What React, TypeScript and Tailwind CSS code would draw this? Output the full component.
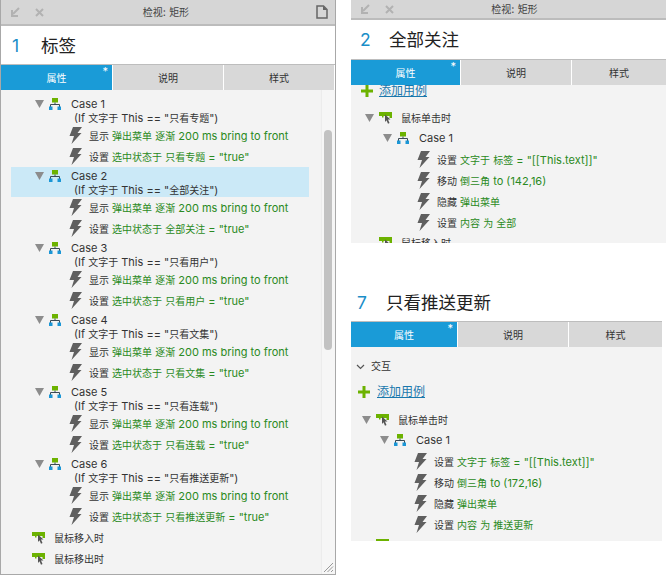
import type { ReactNode } from "react";

const FONT = "font-['Inter','Noto_Sans_CJK_SC',sans-serif]";

// latin runs stay 11px, chinese runs sit at 10px like the original
const Txt = ({ children }: { children: string }) => (
  <>
    {children.split(/([\u4e00-\u9fff]+)/).map((part, i) =>
      i % 2 === 1 ? (
        <span key={i} className="text-[10px]">
          {part}
        </span>
      ) : (
        part
      )
    )}
  </>
);

const Triangle = () => (
  <svg width="9" height="8" viewBox="0 0 9 8" className="shrink-0">
    <path d="M0 0h9L4.500 8z" fill="#8c8c8c" />
  </svg>
);

const CaseIcon = () => (
  <svg width="12" height="12" viewBox="0 0 12 12" className="shrink-0">
    <rect x="3" y="0" width="6" height="4.500" fill="#6cb200" />
    <path d="M1.500 9V6.500h9V9M6 4.500v2" fill="none" stroke="#3a4a55" strokeWidth="1" />
    <rect x="0" y="8.500" width="3.500" height="3.500" fill="#1a96d6" />
    <rect x="8.500" y="8.500" width="3.500" height="3.500" fill="#1a96d6" />
  </svg>
);

const Bolt = () => (
  <svg width="13" height="17" viewBox="0 0 13 17" className="shrink-0">
    <path d="M4 0h9L8.500 6H12.500L2.500 17 5 9H0.500z" fill="#5f5f5f" />
  </svg>
);

const EventIcon = () => (
  <svg width="13" height="12" viewBox="0 0 13 12" className="shrink-0">
    <path d="M0 0h13v6h-2.500V4H4.500v1.500H3V4H0z" fill="#6cb200" />
    <path d="M6 2.500l5.500 5H9l1.500 3.500-1.500.7-1.500-3.500L6 10z" fill="#555" />
  </svg>
);

const Plus = () => (
  <svg width="12" height="12" viewBox="0 0 12 12" className="shrink-0">
    <path d="M4.500 0h3v4.500H12v3H7.500V12h-3V7.500H0v-3h4.500z" fill="#6cb200" />
  </svg>
);

const Action = ({ verb, text, left }: { verb: string; text: string; left: string }) => (
  <div className={`flex h-[21px] items-center ${left}`}>
    <Bolt />
    <span className="ml-[7px] whitespace-nowrap pt-[1px] text-[#333]">
      <Txt>{verb}</Txt>{" "}
      <span className="text-[#2a8a22]">
        <Txt>{text}</Txt>
      </span>
    </span>
  </div>
);

const CaseBlock = ({ n, cond, selected }: { n: number; cond: string; selected?: boolean }) => (
  <div>
    <div className={`h-[30px] pl-[24px] pt-[2px] leading-[13px] ${selected ? "bg-[#cbe9f7]" : ""}`}>
      <div className="flex h-[14px] items-center">
        <Triangle />
        <span className="ml-[5px]"><CaseIcon /></span>
        <span className="ml-[10px] pt-[1px] text-[#333]">Case {n}</span>
      </div>
      <div className="ml-[39px] whitespace-nowrap pt-[1px] text-[#333]">
        <Txt>{`(If 文字于 This == "${cond}")`}</Txt>
      </div>
    </div>
    <Action left="pl-[58px]" verb="显示" text="弹出菜单 逐渐 200 ms bring to front" />
    <Action left="pl-[58px]" verb="设置" text={`选中状态于 ${cond} = "true"`} />
  </div>
);

const Tabs = ({ widths }: { widths: string[] }) => (
  <div className="flex h-[26px] shrink-0 border-t border-[#bdbdbd] text-[10px]">
    <div className={`relative flex items-center justify-center bg-[#1a9bd7] pt-[2px] text-white ${widths[0]}`}>
      属性
      <span className="absolute right-[4px] top-[1px] text-[11px] leading-[11px]">*</span>
    </div>
    <div className={`flex items-center justify-center border-l border-white bg-[#d8d8d8] pt-[2px] text-[#333] ${widths[1]}`}>说明</div>
    <div className={`flex items-center justify-center border-l border-white bg-[#d8d8d8] pt-[2px] text-[#333] ${widths[2]}`}>样式</div>
  </div>
);

const Title = ({ n, text, box }: { n: number; text: string; box: string }) => (
  <div className={`flex shrink-0 items-center bg-white text-[17.5px] ${box}`}>
    <span className="w-[29px] text-[#1a8ec8]">{n}</span>
    <span className="text-[#222]">{text}</span>
  </div>
);

const ClickTree = ({ pos, target, tail }: { pos: string; target: string; tail?: boolean }) => (
  <div>
    <div className="flex h-[20px] items-center pl-[14px]">
      <Triangle />
      <span className="ml-[5px]"><EventIcon /></span>
      <span className="ml-[9px] pt-[1px] text-[10px] text-[#333]">鼠标单击时</span>
    </div>
    <div className="flex h-[20px] items-center pl-[32px]">
      <Triangle />
      <span className="ml-[5px]"><CaseIcon /></span>
      <span className="ml-[10px] pt-[1px] text-[#333]">Case 1</span>
    </div>
    <div className="h-[1px]" />
    <Action left="pl-[66px]" verb="设置" text={`文字于 标签 = "[[This.text]]"`} />
    <Action left="pl-[66px]" verb="移动" text={`倒三角 to (${pos})`} />
    <Action left="pl-[66px]" verb="隐藏" text="弹出菜单" />
    <Action left="pl-[66px]" verb="设置" text={`内容 为 ${target}`} />
    <div className="flex h-[20px] items-center pl-[28px]">
      <EventIcon />
      {tail && <span className="ml-[9px] text-[10px] text-[#333]">鼠标移入时</span>}
    </div>
  </div>
);

const Toolbar = ({ box, doc }: { box: string; doc?: boolean }) => (
  <div className={`relative flex shrink-0 items-center justify-center border-b-2 border-[#bcbcbc] bg-[#d6d6d6] text-[11px] text-[#444] ${box}`}>
    <div className="absolute left-[9px] flex items-center gap-[15px]">
      <svg width="10" height="10" viewBox="0 0 10 10">
        <path d="M9 1L3 7M2 3v6h6" fill="none" stroke="#b2b2b2" strokeWidth="2" />
      </svg>
      <svg width="9" height="9" viewBox="0 0 9 9">
        <path d="M1 1l7 7M8 1L1 8" stroke="#b2b2b2" strokeWidth="2" />
      </svg>
    </div>
    <span className="whitespace-pre">
      <Txt>检视: 矩形</Txt>
    </span>
    {doc && (
      <svg width="12" height="14" viewBox="0 0 12 14" className="absolute right-[7px] top-[5px]">
        <path d="M1 1h6.500L11 4.500V13H1z" fill="none" stroke="#666" strokeWidth="1.500" />
        <path d="M7 1v4h4z" fill="#666" />
      </svg>
    )}
  </div>
);

export default function App() {
  return (
    <div className={`flex h-[576px] w-[666px] overflow-hidden bg-white text-[11px] ${FONT}`}>
      <div className="flex h-[575px] w-[336px] shrink-0 flex-col border-x border-b border-[#a8a8a8]">
        <Toolbar box="h-[26px] pr-[4px]" doc />
        <Title n={1} text="标签" box="h-[38px] pl-[11px] pt-[2px]" />
        <Tabs widths={["w-[111px]", "w-[111px]", "w-[111px]"]} />
        <div className="relative flex-1 overflow-hidden bg-[#f3f3f3] pt-[5px]">
          <div className="ml-[10px] w-[298px]">
            <CaseBlock n={1} cond="只看专题" />
            <CaseBlock n={2} cond="全部关注" selected />
            <CaseBlock n={3} cond="只看用户" />
            <CaseBlock n={4} cond="只看文集" />
            <CaseBlock n={5} cond="只看连载" />
            <CaseBlock n={6} cond="只看推送更新" />
            <div className="flex h-[21px] items-center pl-[21px]">
              <EventIcon />
              <span className="ml-[9px] pt-[1px] text-[10px] text-[#333]">鼠标移入时</span>
            </div>
            <div className="flex h-[21px] items-center pl-[21px]">
              <EventIcon />
              <span className="ml-[9px] pt-[1px] text-[10px] text-[#333]">鼠标移出时</span>
            </div>
          </div>
          <div className="absolute bottom-0 right-0 top-0 w-[14px] border-l border-[#ececec] bg-[#f6f6f6]" />
          <div className="absolute right-[3px] top-[40px] h-[220px] w-[8px] rounded-[4px] bg-[#c2c2c2]" />
          <svg width="11" height="11" viewBox="0 0 11 11" className="absolute bottom-[1px] right-[1px]">
            <path d="M1 10l9-9M4.500 10L10 4.500M8 10l2-2" stroke="#999" strokeWidth="1" />
          </svg>
        </div>
      </div>

      <div className="ml-[15px] flex flex-1 flex-col">
        <div className="flex h-[243px] flex-col">
          <Toolbar box="h-[20px] pl-[12px]" />
          <Title n={2} text="全部关注" box="h-[39px] pl-[9px] pt-[1px]" />
          <Tabs widths={["w-[109px]", "w-[111px]", "w-[95px]"]} />
          <div className="flex-1 overflow-hidden bg-[#f3f3f3]">
            <div className="-mt-[1px] flex h-[13px] items-center pl-[10px]">
              <Plus />
              <span className="ml-[6px] text-[12px] text-[#1a78ad] underline">添加用例</span>
            </div>
            <div className="h-[11px]" />
            <ClickTree pos="142,16" target="全部" tail />
          </div>
        </div>

        <div className="h-[47px]" />

        <div className="flex h-[251px] w-[311px] flex-col">
          <Title n={7} text="只看推送更新" box="h-[31px] pb-[5px] pl-[6px]" />
          <Tabs widths={["w-[106px]", "w-[111px]", "w-[94px]"]} />
          <div className="flex-1 overflow-hidden bg-[#f3f3f3]">
            <div className="flex h-[38px] items-center pl-[5px] pt-[1px]">
              <svg width="9" height="6" viewBox="0 0 9 6"><path d="M1 1l3.500 3.500L8 1" fill="none" stroke="#555" strokeWidth="1.200" /></svg>
              <span className="ml-[6px] text-[10px] text-[#333]">交互</span>
            </div>
            <div className="flex h-[13px] items-center pl-[7px]">
              <Plus />
              <span className="ml-[7px] text-[12px] text-[#1a78ad] underline">添加用例</span>
            </div>
            <div className="h-[12px]" />
            <div className="-ml-[3px]">
              <ClickTree pos="172,16" target="推送更新" />
            </div>
          </div>
        </div>
      </div>
    </div>
  );
}
